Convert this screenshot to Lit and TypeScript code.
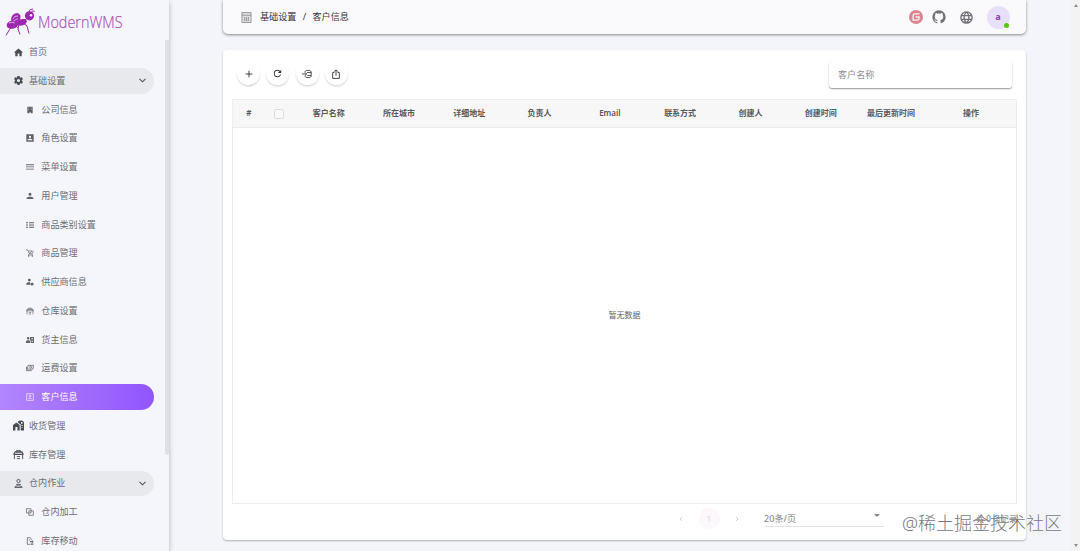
import { LitElement, html, css, svg } from "lit";
import { customElement, property } from "lit/decorators.js";

const fill = (d: string) => svg`<path d=${d} fill="currentColor" fill-rule="evenodd"></path>`;
const line = (d: string, w = 2) =>
  svg`<path d=${d} fill="none" stroke="currentColor" stroke-width=${w}></path>`;

const ICONS: Record<string, unknown> = {
  home: fill("M10,20V14H14V20H19V12H22L12,3L2,12H5V20H10Z"),
  cog: fill("M12,15.5A3.5,3.5 0 0,1 8.5,12A3.5,3.5 0 0,1 12,8.5A3.5,3.5 0 0,1 15.5,12A3.5,3.5 0 0,1 12,15.5M19.43,12.97C19.47,12.65 19.5,12.33 19.5,12C19.5,11.67 19.47,11.34 19.43,11L21.54,9.37C21.73,9.22 21.78,8.95 21.66,8.73L19.66,5.27C19.54,5.05 19.27,4.96 19.05,5.05L16.56,6.05C16.04,5.66 15.5,5.32 14.87,5.07L14.5,2.42C14.46,2.18 14.25,2 14,2H10C9.75,2 9.54,2.18 9.5,2.42L9.13,5.07C8.5,5.32 7.96,5.66 7.44,6.05L4.95,5.05C4.73,4.96 4.46,5.05 4.34,5.27L2.34,8.73C2.21,8.95 2.27,9.22 2.46,9.37L4.57,11C4.53,11.34 4.5,11.67 4.5,12C4.5,12.33 4.53,12.65 4.57,12.97L2.46,14.63C2.27,14.78 2.21,15.05 2.34,15.27L4.34,18.73C4.46,18.95 4.73,19.03 4.95,18.95L7.44,17.94C7.96,18.34 8.5,18.68 9.13,18.93L9.5,21.58C9.54,21.82 9.75,22 10,22H14C14.25,22 14.46,21.82 14.5,21.58L14.87,18.93C15.5,18.67 16.04,18.34 16.56,17.94L19.05,18.95C19.27,19.03 19.54,18.95 19.66,18.73L21.66,15.27C21.78,15.05 21.73,14.78 21.54,14.63L19.43,12.97Z"),
  building: fill("M4,2H20V22H14V19H10V22H4V2M7.500,5V7H9V5H7.500M11.300,5V7H12.700V5H11.300M15,5V7H16.500V5H15M7.500,10V12H9V10H7.500M15,10V12H16.500V10H15Z"),
  badge: fill("M1,1H23V23H1V1M12,5A3.500,3.500 0 0,0 8.500,8.500A3.500,3.500 0 0,0 12,12A3.500,3.500 0 0,0 15.500,8.500A3.500,3.500 0 0,0 12,5M5,19H19V17C19,15 14,13.900 12,13.900C10,13.900 5,15 5,17V19Z"),
  menu: fill("M0,4H24V6.500H0V4M0,10.500H24V13H0V10.500M0,17H24V19.500H0V17Z"),
  account: fill("M12,2A4.500,4.500 0 0,1 16.500,6.500A4.500,4.500 0 0,1 12,11A4.500,4.500 0 0,1 7.500,6.500A4.500,4.500 0 0,1 12,2M12,14C17,14 22,15.790 22,18V21H2V18C2,15.790 7,14 12,14Z"),
  list: fill("M0,4H6V7H0V4M9,4H24V6.500H9V4M0,10.500H6V13.500H0V10.500M9,10.800H24V13.200H9V10.800M0,17H6V20H0V17M9,17.500H24V20H9V17.500Z"),
  cart: svg`${line("M0,2.500H5L10,14H19L22,6M10,14L7,18H21M7,6H19L9,14", 2)}${fill("M8,19A2.300,2.300 0 1,1 8,23.600A2.300,2.300 0 1,1 8,19M19,19A2.300,2.300 0 1,1 19,23.600A2.300,2.300 0 1,1 19,19Z")}`,
  supplier: fill("M10,2A4.300,4.300 0 1,1 10,10.600A4.300,4.300 0 1,1 10,2M10,13C11,13 12,13.100 13,13.300V20H1V17C1,14.500 6,13 10,13M18.500,12.500L19.400,15L22,15L23.300,17.300L21.800,19L22.500,21.700L19.500,22L18,23.500L16,22L14,20L14.600,17.800L14.500,15.200L17,15L18.500,12.500Z"),
  warehouse: svg`${line("M3,22V12M21,12V22M8.500,16.500H15.500M8.500,21H15.500", 2)}${fill("M1,10L4,5H7.500V2H16.500V5H20L23,10V13H1V10M9.500,4V5H14.500V4H9.500M4,8V10.500H20V8H4Z")}`,
  owner: fill("M6.500,3A3.800,3.800 0 1,1 6.500,10.600A3.800,3.800 0 1,1 6.500,3M0,21V16.500C0,14 4,12.500 7,12.500C9,12.500 12,13 12.500,15V21H0M12,3H24V21H14.500V14L12,12V3M16,6.500V9H21.500V6.500H16M16,11V12.500H21.500V11H16M17,15V17H21.500V15H17Z"),
  freight: svg`${line("M6,4H23L20.500,15.500H4L6,4M1.500,8V20H17.500M14.500,7A2.700,2.700 0 1,1 13.500,12.500A2.700,2.700 0 0,1 14.500,7", 2.3)}`,
  customer: svg`${line("M2,2H22V22H2V2M6.500,18C8,14 16,14 17.500,18M12,6A3,3 0 1,1 12,12A3,3 0 0,1 12,6", 2.2)}`,
  receive: fill("M0,23V11L7.500,5.500L14.500,11V23H9.700V15H5.300V23H0M11,3.500C15,0 23,0 24,6V23H16.800V10L11,6V3.500M17.500,4.500V8H20.800V4.500H17.500M18.800,11V13H21V11H18.800M18.800,15V17H21V15H18.800Z"),
  person: svg`${line("M12,3A3.500,3.500 0 1,1 12,10A3.500,3.500 0 0,1 12,3M7,14H17M4,20.500C4,16 20,16 20,20.500H4Z", 2)}`,
  copy: svg`${line("M1.500,2H15V15H1.500V2M8.500,8.500H22V22H8.500V8.500", 2.2)}`,
  move: svg`${line("M17.500,9V7L12,2H4V22H12M8,9H13", 2.3)}${fill("M12,12H18V9.500L23,14L18,18.500V16H12V12M14,19.500H22V23H14V19.500Z")}`,
  chevronDown: line("M4,7.500L12,15.500L20,7.500", 2.7),
  chevronLeft: line("M15,6L9,12L15,18"),
  chevronRight: line("M9,6L15,12L9,18"),
  plus: line("M12,4V20M4,12H20", 2.2),
  refresh: fill("M17.65,6.35C16.2,4.9 14.21,4 12,4A8,8 0 0,0 4,12A8,8 0 0,0 12,20C15.73,20 18.84,17.45 19.73,14H17.65C16.83,16.33 14.61,18 12,18A6,6 0 0,1 6,12A6,6 0 0,1 12,6C13.66,6 15.14,6.69 16.22,7.78L13,11H20V4L17.65,6.35Z"),
  importData: svg`${line("M7,7.500C7,2 22,2 22,7V17C22,22 7,22 7,16.500M12,8.500H22M13,15.500H22M0,12H11M7,8L11,12L7,16", 2)}`,
  exportData: svg`${line("M8,8.500H4V22.500H20V8.500H16M12,16V2.500M7.500,6.500L12,2L16.500,6.500", 2.2)}`,
  page: svg`<path d="M2,1H22V23H2V1Z" fill="#dedee1"></path>${line("M2,1H22V23H2V1M2,7H22M8,11V20M12,11V20M16,11V20", 1.4)}`,
  github: fill("M12,2A10,10 0 0,0 2,12C2,16.42 4.87,20.17 8.84,21.5C9.34,21.58 9.5,21.27 9.5,21C9.5,20.77 9.5,20.14 9.5,19.31C6.73,19.91 6.14,17.97 6.14,17.97C5.68,16.81 5.03,16.5 5.03,16.5C4.12,15.88 5.1,15.9 5.1,15.9C6.1,15.97 6.63,16.93 6.63,16.93C7.5,18.45 8.97,18 9.54,17.76C9.63,17.11 9.89,16.67 10.17,16.42C7.95,16.17 5.62,15.31 5.62,11.5C5.62,10.39 6,9.5 6.65,8.79C6.55,8.54 6.2,7.5 6.75,6.15C6.75,6.15 7.59,5.88 9.5,7.17C10.29,6.95 11.15,6.84 12,6.84C12.85,6.84 13.71,6.95 14.5,7.17C16.41,5.88 17.25,6.15 17.25,6.15C17.8,7.5 17.45,8.54 17.35,8.79C18,9.5 18.38,10.39 18.38,11.5C18.38,15.32 16.04,16.16 13.81,16.41C14.17,16.72 14.5,17.33 14.5,18.26C14.5,19.6 14.5,20.68 14.5,21C14.5,21.27 14.66,21.59 15.17,21.5C19.14,20.16 22,16.42 22,12A10,10 0 0,0 12,2Z"),
  web: line("M12,3A9,9 0 1,1 12,21A9,9 0 1,1 12,3M12,3C6.8,8 6.8,16 12,21M12,3C17.2,8 17.2,16 12,21M4,9H20M4,15H20", 2.2),
  gitee: svg`<circle cx="12" cy="12" r="12" fill="#dc8490"></circle><path d="M18,6.8H10.5Q7,6.8 7,10.3V17.2H14.5Q17.4,17.2 17.4,14.3V12H11.2" fill="none" stroke="#fdf3f5" stroke-width="2.2"></path>`,
};

@customElement("wms-icon")
class WmsIcon extends LitElement {
  @property() name = "";
  @property({ type: Number }) size = 10;
  static styles = css`
    :host { display: inline-flex; flex: none; }
    svg { display: block; }
  `;
  render() {
    return html`<svg viewBox="0 0 24 24" width=${this.size} height=${this.size}>${ICONS[this.name]}</svg>`;
  }
}

interface Item { icon: string; text: string; sub?: boolean; open?: boolean; active?: boolean }

const MENU: Item[] = [
  { icon: "home", text: "首页" },
  { icon: "cog", text: "基础设置", open: true },
  { icon: "building", text: "公司信息", sub: true },
  { icon: "badge", text: "角色设置", sub: true },
  { icon: "menu", text: "菜单设置", sub: true },
  { icon: "account", text: "用户管理", sub: true },
  { icon: "list", text: "商品类别设置", sub: true },
  { icon: "cart", text: "商品管理", sub: true },
  { icon: "supplier", text: "供应商信息", sub: true },
  { icon: "warehouse", text: "仓库设置", sub: true },
  { icon: "owner", text: "货主信息", sub: true },
  { icon: "freight", text: "运费设置", sub: true },
  { icon: "customer", text: "客户信息", sub: true, active: true },
  { icon: "receive", text: "收货管理" },
  { icon: "warehouse", text: "库存管理" },
  { icon: "person", text: "仓内作业", open: true },
  { icon: "copy", text: "仓内加工", sub: true },
  { icon: "move", text: "库存移动", sub: true },
];

const COLUMNS = ["客户名称", "所在城市", "详细地址", "负责人", "Email", "联系方式", "创建人", "创建时间", "最后更新时间", "操作"];

@customElement("app-root")
class AppRoot extends LitElement {
  static styles = css`
    :host {
      display: flex; position: relative; width: 1080px; height: 551px; overflow: hidden;
      background: #f3f5fa; color: #6d6e72;
      font: 9.1px/12px "Noto Sans", "Noto Sans CJK SC", sans-serif;
    }
    * { box-sizing: border-box; }
    .side {
      flex: none; width: 169px; height: 551px; display: flex; overflow: hidden;
      background: #f5f6fc; box-shadow: 0 2px 5px rgba(0, 0, 0, 0.28);
    }
    .nav { width: 165px; }
    .brand { display: block; width: 130px; height: 37.7px; overflow: visible; }
    .brand text { font-family: "Open Sans", "Noto Sans", sans-serif; font-size: 16px; font-weight: 300; }
    .slot { height: 28.75px; display: flex; align-items: center; }
    .item {
      width: 153.5px; height: 25.4px; border-radius: 0 13px 13px 0; padding: 0 7px 0 12.5px;
      display: flex; align-items: center; gap: 5.5px;
    }
    .item wms-icon { color: #4b4c53; }
    .item.sub { padding-left: 26px; gap: 7.3px; }
    .item.sub wms-icon { color: #606167; }
    .item.open { background: #e8e9ed; }
    .item.active { background: linear-gradient(90deg, #b286fd, #9155fd); color: #fff; }
    .item.active wms-icon { color: #f3eaff; }
    .label { flex: 1; white-space: nowrap; }
    .thumb { width: 4px; height: 415px; margin-top: 40px; background: #dfe0e5; border-radius: 0 0 3px 3px; }
    .main { width: 803.5px; margin-left: 53.5px; display: flex; flex-direction: column; gap: 16px; }
    .top {
      height: 34px; padding: 0 16.5px 0 18.5px; display: flex; align-items: center;
      background: #fafafd; border-radius: 0 0 5px 5px; box-shadow: 0 1px 3px rgba(0, 0, 0, 0.45);
      color: #333438;
    }
    .crumb { flex: 1; margin-left: 8px; word-spacing: 4px; }
    .top wms-icon { color: #707176; }
    .gap1 { margin-left: 8px; }
    .gap2 { margin-left: 12px; }
    .avatar {
      position: relative; margin-left: 12.5px; width: 23px; height: 23px; border-radius: 50%;
      background: #e8dffa; color: #8d3bb5; font-weight: 700; text-align: center; line-height: 22px;
    }
    .dot { position: absolute; right: 1px; bottom: 1px; width: 5px; height: 5px; border-radius: 50%; background: #56ca00; }
    .card {
      height: 490px; padding: 12px 9px 0 9.5px; background: #fff; border-radius: 4px;
      box-shadow: 0 1px 2px rgba(0, 0, 0, 0.28);
    }
    .tools { height: 37px; display: flex; align-items: flex-start; padding: 0 5px; gap: 6.3px; }
    .tool {
      width: 23px; height: 23px; border-radius: 50%; display: flex; align-items: center; justify-content: center;
      color: #333; box-shadow: 0 1.5px 1.5px rgba(0, 0, 0, 0.15);
    }
    .search {
      margin-left: auto; width: 183.5px; height: 26px; padding-left: 9.5px; line-height: 25px; color: #909094;
      border-radius: 3px; box-shadow: 0 1px 1.5px rgba(0, 0, 0, 0.4);
    }
    .table { height: 405px; border: 1px solid #ededef; display: flex; flex-direction: column; width: 785px; }
    .head {
      flex: none; height: 28px; display: grid; grid-template-columns: 31.5px 29px repeat(9, 70.3px) 1fr;
      align-items: center; justify-items: center; background: #f7f7f8; border-bottom: 1px solid #ebebed;
      font-size: 8px; font-weight: 600; color: #58595c; padding-bottom: 2px;
    }
    .box { width: 10px; height: 10px; border: 1px solid #dcdce0; border-radius: 2px; background: #fafafa; margin-top: 3px; }
    .empty { flex: 1; display: flex; align-items: center; justify-content: center; font-size: 8px; color: #606266; padding-bottom: 2px; }
    .pager { height: 29px; display: flex; align-items: center; color: #c0c0c4; padding-left: 445px; }
    .pg { width: 21px; height: 21px; border-radius: 50%; margin: 0 13.5px; background: #fbf7fb; color: #e3c4e6; text-align: center; font-size: 7px; line-height: 21px; }
    .size {
      width: 120px; height: 16px; margin-left: 23px; border-bottom: 1px solid #e3e3e5; color: #7e7f83;
      display: flex; justify-content: space-between; line-height: 15px;
    }
    .caret { border: 3px solid transparent; border-top-color: #85868a; border-bottom: 0; margin: 3px 4px 0 0; height: 3px; }
    .total { margin-left: auto; font-size: 8px; color: #6d6e72; }
    .rail { margin-left: auto; width: 9px; background: #f3f3f4; display: flex; flex-direction: column; justify-content: space-between; align-items: center; padding: 4px 0; }
    .up, .down { border: 2px solid transparent; }
    .up { border-bottom: 3px solid #8b8b8b; border-top: 0; }
    .down { border-top: 3px solid #8b8b8b; border-bottom: 0; }
    .mark {
      position: absolute; left: 902px; top: 511px; font: 300 18px/24px "Noto Sans", "Noto Sans CJK SC", sans-serif;
      color: #77787c; white-space: nowrap; text-shadow: -0.5px -0.5px 0 #fff;
    }
  `;

  private ant() {
    return svg`
      <g fill="#9c27b0" stroke="none">
        <ellipse cx="12.5" cy="24.5" rx="6" ry="4.2" transform="rotate(-15 12.5 24.5)"></ellipse>
        <ellipse cx="22" cy="22.300" rx="5" ry="3.100" transform="rotate(-18 22 22.3)"></ellipse>
        <circle cx="29.500" cy="15.800" r="4.600"></circle>
        <path d="M11 20Q11 14 17 13Q22 14 20 20L15 23Z"></path>
      </g>
      <g fill="none" stroke="#9c27b0" stroke-width="1">
        <path d="M24 21L27 18M13 26L9.500 29.500L6 35.500M19 24L18 29L20 34.500M23 23L27 26L29 33.500M29 12L30 9.800L33 9M31 12.500L33 10.800L34.500 11.500M16 26L18 28"></path>
      </g>
      <circle cx="31" cy="15.300" r="1.300" fill="#f5f6fc"></circle>
      <path d="M13 19Q14 15.500 18 16M13.500 21L18 18.500M9 23Q12 21.500 15 23" stroke="#e9cdf0" fill="none" stroke-width="0.800"></path>
      <text x="38" y="28" textLength="84.500" lengthAdjust="spacingAndGlyphs" fill="#a94fbc" stroke="#a94fbc" stroke-width="0.200">ModernWMS</text>`;
  }

  render() {
    return html`
      <aside class="side">
        <nav class="nav">
          <svg class="brand" viewBox="0 0 130 37.7">${this.ant()}</svg>
          ${MENU.map(
            (m) => html`<div class="slot">
              <div class="item ${m.sub ? "sub" : ""} ${m.open ? "open" : ""} ${m.active ? "active" : ""}">
                <wms-icon name=${m.icon} size=${m.sub ? 8 : 11}></wms-icon>
                <span class="label">${m.text}</span>
                ${m.open ? html`<wms-icon name="chevronDown" size="9"></wms-icon>` : null}
              </div>
            </div>`
          )}
        </nav>
        <div class="thumb"></div>
      </aside>
      <main class="main">
        <header class="top">
          <wms-icon name="page" size="11"></wms-icon>
          <span class="crumb">基础设置 / 客户信息</span>
          <wms-icon name="gitee" size="14"></wms-icon>
          <wms-icon class="gap1" name="github" size="16"></wms-icon>
          <wms-icon class="gap2" name="web" size="15"></wms-icon>
          <div class="avatar">a<span class="dot"></span></div>
        </header>
        <section class="card">
          <div class="tools">
            ${["plus", "refresh", "importData", "exportData"].map(
              (n) => html`<div class="tool"><wms-icon name=${n} size=${n === "refresh" ? 11 : 10}></wms-icon></div>`
            )}
            <div class="search">客户名称</div>
          </div>
          <div class="table">
            <div class="head">
              <span>#</span><span class="box"></span>
              ${COLUMNS.map((c) => html`<span>${c}</span>`)}
            </div>
            <div class="empty">暂无数据</div>
          </div>
          <div class="pager">
            <wms-icon name="chevronLeft" size="8"></wms-icon>
            <div class="pg">1</div>
            <wms-icon name="chevronRight" size="8"></wms-icon>
            <div class="size">20条/页<span class="caret"></span></div>
            <span class="total">共 0 条记录</span>
          </div>
        </section>
      </main>
      <div class="rail"><span class="up"></span><span class="down"></span></div>
      <div class="mark">@稀土掘金技术社区</div>
    `;
  }
}
